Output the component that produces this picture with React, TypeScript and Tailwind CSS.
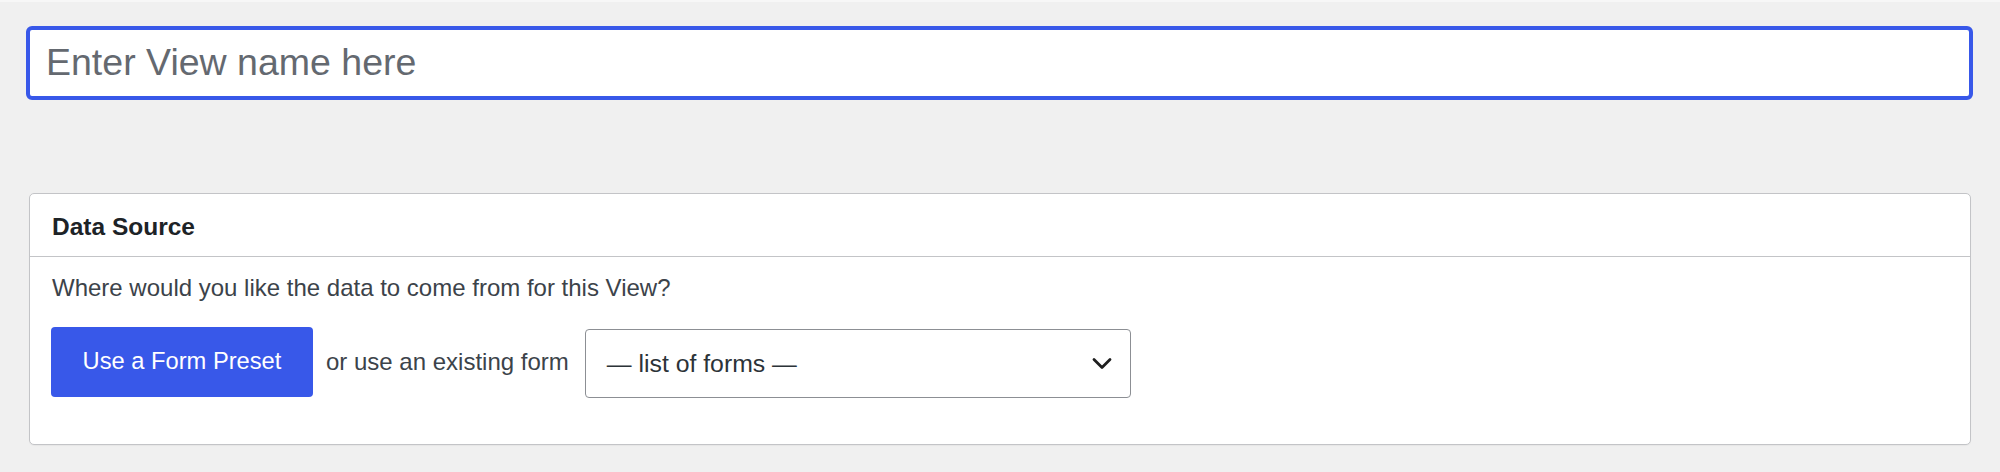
import React from 'react'

const font = { fontFamily: '"Liberation Sans", Arial, sans-serif' }

function Chevron() {
    return (
        <svg viewBox="0 0 20 13" className="h-[13px] w-[20px]" fill="none" stroke="#1e1e1e" strokeWidth="2.8" strokeLinecap="round" strokeLinejoin="round">
            <path d="M2 2.5 L10 10.5 L18 2.5" />
        </svg>
    )
}

export default function App() {
    return (
        <div className="min-h-screen w-full bg-[#f0f0f0]" style={font}>
            <div className="h-[2px] w-full bg-[#f7f7f7]" />
            <div className="pl-[26px] pr-[27px] pt-[24px]">
                <div className="flex h-[74px] w-full items-center rounded-[6px] border-4 border-[#3858e9] bg-white pl-[16px]">
                    <span className="text-[37.5px] leading-none text-[#646970]">Enter View name here</span>
                </div>

                <div className="ml-[3px] mr-[2px] mt-[93px] rounded-[5px] border border-[#c3c4c7] bg-white shadow-[0_1px_1px_rgba(0,0,0,0.04)]">
                    <div className="flex h-[63px] items-center border-b border-[#c3c4c7] px-[22px] pt-[4px]">
                        <h2 className="text-[24.5px] font-bold text-[#1d2327]">Data Source</h2>
                    </div>
                    <div className="px-[22px] pb-[46px] pt-[15px]">
                        <p className="text-[24px] leading-[32px] text-[#3c434a]">
                            Where would you like the data to come from for this View?
                        </p>
                        <div className="mt-[22px] flex items-center">
                            <button className="-ml-px flex h-[70px] w-[262px] items-center justify-center rounded-[4px] bg-[#3858e9] text-[23.7px] text-white">
                                Use a Form Preset
                            </button>
                            <span className="ml-[13px] text-[24px] text-[#3c434a]">or use an existing form</span>
                            <div className="ml-[16px] mt-[3px] flex h-[69px] w-[546px] items-center justify-between rounded-[4px] border-[1.5px] border-[#8c8f94] bg-white pl-[21px] pr-[18px]">
                                <span className="text-[24.8px] text-[#2c3338]">— list of forms —</span>
                                <Chevron />
                            </div>
                        </div>
                    </div>
                </div>
            </div>
        </div>
    )
}
